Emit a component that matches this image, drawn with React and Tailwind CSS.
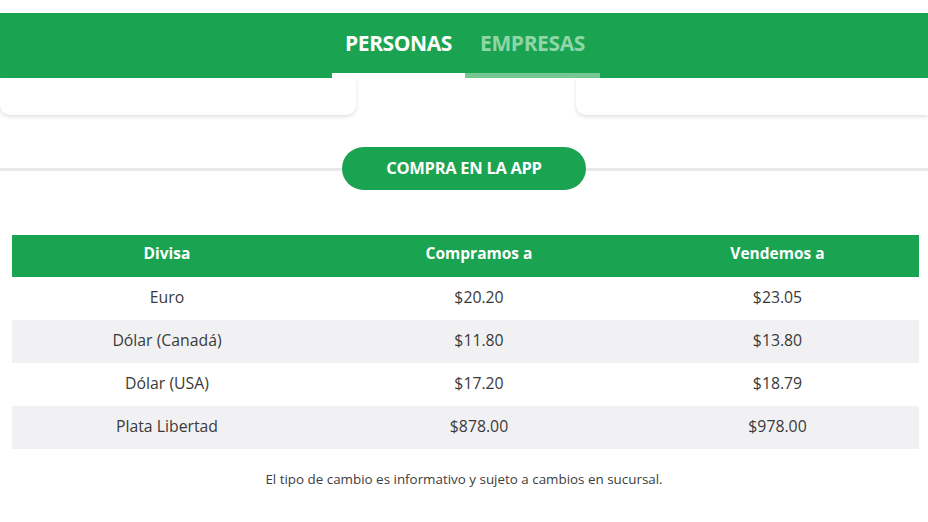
import React from 'react';

const rates = [
  { name: 'Euro', buy: '$20.20', sell: '$23.05' },
  { name: 'Dólar (Canadá)', buy: '$11.80', sell: '$13.80' },
  { name: 'Dólar (USA)', buy: '$17.20', sell: '$18.79' },
  { name: 'Plata Libertad', buy: '$878.00', sell: '$978.00' },
];

const App = () => {
  return (
    <div
      className="h-[522px] w-[928px] overflow-hidden bg-white pt-[13px] text-[#3a3a3a]"
      style={{ fontFamily: '"Open Sans", "Liberation Sans", sans-serif' }}
    >
      {/* tabs bar */}
      <div className="flex h-[65px] items-end justify-center bg-[#1aa452]">
        <div className="ml-[4px] flex">
          <button className="flex h-[65px] w-[133px] flex-col justify-between">
            <span className="pt-[16px] text-[21px] font-bold leading-[28px] tracking-[-0.4px] text-white">PERSONAS</span>
            <span className="h-[5px] w-full bg-white" />
          </button>
          <button className="flex h-[65px] w-[135px] flex-col justify-between">
            <span className="pt-[16px] text-[21px] font-bold leading-[28px] tracking-[-0.4px] text-[#8fd6a6]">EMPRESAS</span>
            <span className="h-[5px] w-full bg-[#76c892]" />
          </button>
        </div>
      </div>

      {/* cards under the tabs */}
      <div className="flex justify-between">
        <div className="h-[37px] w-[356px] rounded-b-[10px] bg-white shadow-[0_2px_4px_rgba(0,0,0,0.12)]" />
        <div className="h-[37px] w-[352px] rounded-bl-[10px] bg-white shadow-[0_2px_4px_rgba(0,0,0,0.12)]" />
      </div>

      {/* app button */}
      <div className="mt-[32px] flex items-center">
        <div className="mt-[2px] h-[3px] flex-1 bg-[#e9e9ec]" />
        <button className="h-[43px] w-[244px] rounded-full bg-[#1aa452] text-[16.5px] font-bold tracking-[-0.3px] text-white">
          COMPRA EN LA APP
        </button>
        <div className="mt-[2px] h-[3px] flex-1 bg-[#e9e9ec]" />
      </div>

      {/* exchange table */}
      <div className="mx-[12px] mt-[45px] w-[907px]">
        <div className="flex h-[42px] items-center bg-[#1aa452] pb-[5px] text-[15.5px] font-bold text-white">
          <div className="w-[310px] text-center">Divisa</div>
          <div className="w-[314px] text-center">Compramos a</div>
          <div className="w-[283px] text-center">Vendemos a</div>
        </div>
        {rates.map((rate, i) => (
          <div
            key={rate.name}
            className={`flex h-[43px] items-center pb-[2px] text-[15.8px] ${i % 2 === 1 ? 'bg-[#f1f1f3]' : 'bg-white'}`}
          >
            <div className="w-[310px] text-center">{rate.name}</div>
            <div className="w-[314px] text-center">{rate.buy}</div>
            <div className="w-[283px] text-center">{rate.sell}</div>
          </div>
        ))}
      </div>

      <p className="mt-[20px] text-center text-[13.4px] text-[#3d3d3d]">
        El tipo de cambio es informativo y sujeto a cambios en sucursal.
      </p>
    </div>
  );
};

export default App;
